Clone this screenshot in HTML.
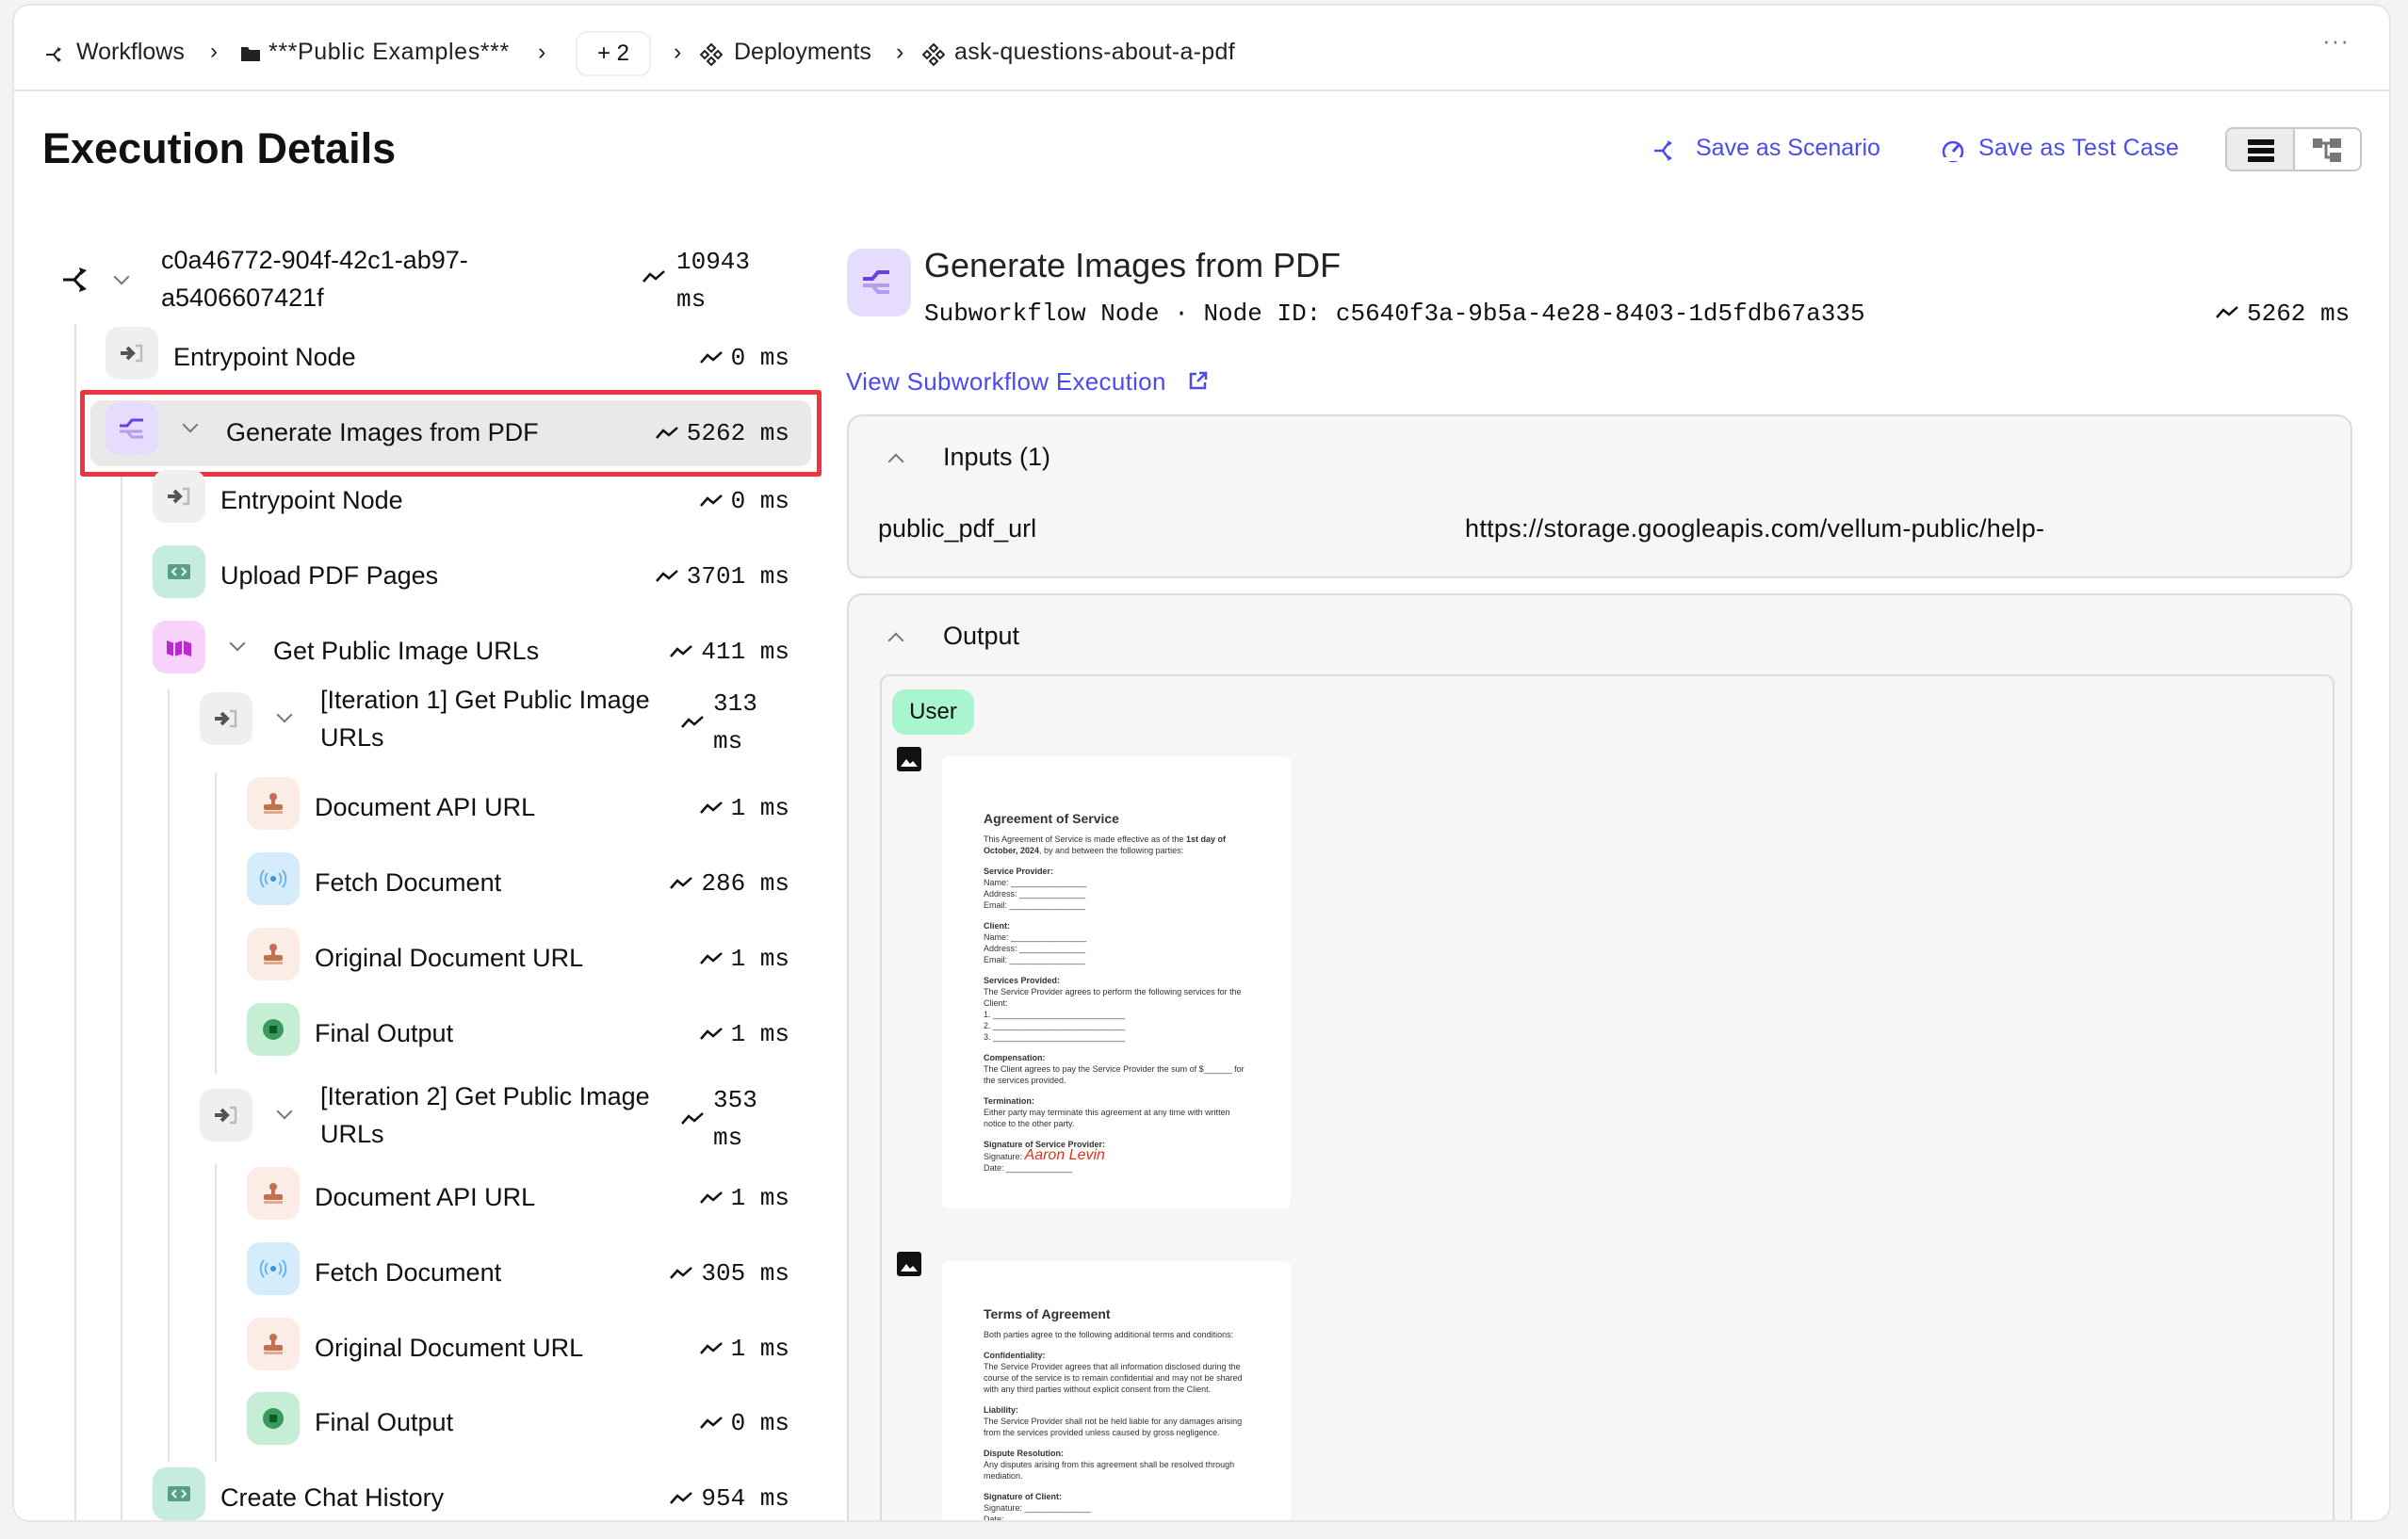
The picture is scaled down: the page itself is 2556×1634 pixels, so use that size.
<!DOCTYPE html>
<html><head><meta charset="utf-8"><style>
*{box-sizing:border-box;margin:0;padding:0}
body{width:2556px;height:1634px;background:#f3f3f3;font-family:"Liberation Sans",sans-serif;color:#111;position:relative;overflow:hidden}
.card{position:absolute;left:13px;top:4px;width:2525px;height:1612px;background:#fff;border-radius:18px;border:2px solid #e6e6e6;overflow:hidden}
.a{position:absolute;white-space:nowrap}
.bc{font-size:25px;color:#222;top:35px}
.ico{position:absolute;width:56px;height:56px;border-radius:14px;display:flex;align-items:center;justify-content:center}
.t{position:absolute;font-size:27px;color:#111;white-space:nowrap}
.ms{position:absolute;font-family:"Liberation Mono",monospace;font-size:26px;color:#111;white-space:nowrap;text-align:right}
.vl{position:absolute;width:2px;background:#e3e3e3}
.chev{position:absolute;width:12px;height:12px;border-right:2.5px solid #777;border-bottom:2.5px solid #777;transform:rotate(45deg)}
.blue{color:#4b4bf0}
.doc{position:absolute;background:#fff;border-radius:6px;font-size:9px;color:#333;padding:0 44px;white-space:normal;line-height:12px}
.doc h4{font-size:14px;margin:0 0 10px}
.doc b{display:block;font-size:9px;margin-top:10px}
#tree{position:absolute;left:-15px;top:-5px;width:1000px;height:1700px}
</style></head><body>
<div class="card">
<svg class="a" style="left:33px;top:42px" width="22" height="20" viewBox="0 0 22 20"><path d="M1 10h8l5-6M9 10l5 6" stroke="#222" stroke-width="2" fill="none"/><path d="M13 2l4 2-3 3zM13 18l4-2-3-3z" fill="#222"/></svg>
<div class="a bc" style="left:66px">Workflows</div>
<div class="a bc" style="left:208px;font-size:24px">›</div>
<svg class="a" style="left:240px;top:42px" width="22" height="18"><path d="M1 2h7l2 3h11v12H1z" fill="#222"/></svg>
<div class="a bc" style="left:270px;letter-spacing:0.6px">***Public Examples***</div>
<div class="a bc" style="left:556px">›</div>
<div class="a" style="left:596px;top:27px;width:80px;height:48px;border:2px solid #eee;border-radius:12px;font-size:24px;text-align:center;line-height:44px">+ 2</div>
<div class="a bc" style="left:700px">›</div>
<svg class="a" style="left:728px;top:40px" width="24" height="24" viewBox="0 0 24 24"><path d="M12 1l4 4-4 4-4-4zM12 15l4 4-4 4-4-4zM5 8l4 4-4 4-4-4zM19 8l4 4-4 4-4-4z" fill="none" stroke="#222" stroke-width="2"/></svg>
<div class="a bc" style="left:764px">Deployments</div>
<div class="a bc" style="left:936px">›</div>
<svg class="a" style="left:964px;top:40px" width="24" height="24" viewBox="0 0 24 24"><path d="M12 1l4 4-4 4-4-4zM12 15l4 4-4 4-4-4zM5 8l4 4-4 4-4-4zM19 8l4 4-4 4-4-4z" fill="none" stroke="#222" stroke-width="2"/></svg>
<div class="a bc" style="left:998px;letter-spacing:0.3px">ask-questions-about-a-pdf</div>
<div class="a" style="left:2450px;top:22px;font-size:26px;color:#777;letter-spacing:1px">···</div>
<div class="a" style="left:0;top:89px;width:2525px;height:2px;background:#e6e6e6"></div>

<div class="a" style="left:30px;top:126px;font-size:45px;font-weight:bold">Execution Details</div>
<svg class="a" style="left:1740px;top:142px" width="26" height="24"><path d="M1 12h9l6-8M10 12l6 8" stroke="#4b4bf0" stroke-width="2.5" fill="none"/><path d="M15 1l5 3-4 3zM15 23l5-3-4-3z" fill="#4b4bf0"/></svg>
<div class="a blue" style="left:1785px;top:137px;font-size:25px">Save as Scenario</div>
<svg class="a" style="left:2044px;top:141px" width="28" height="26"><circle cx="14" cy="14" r="10" stroke="#4b4bf0" stroke-width="2.5" fill="none"/><path d="M14 14l6-7" stroke="#4b4bf0" stroke-width="3"/><path d="M4 22h20" stroke="#fff" stroke-width="4"/></svg>
<div class="a blue" style="left:2085px;top:137px;font-size:25px;letter-spacing:0.3px">Save as Test Case</div>
<div class="a" style="left:2347px;top:129px;width:145px;height:47px;border:2px solid #c8c8c8;border-radius:8px;overflow:hidden;display:flex">
<div style="width:72px;background:#ececec;border-right:2px solid #c8c8c8;position:relative"><div class="a" style="left:22px;top:11px;width:28px;height:6px;background:#111"></div><div class="a" style="left:22px;top:20px;width:28px;height:6px;background:#111"></div><div class="a" style="left:22px;top:29px;width:28px;height:6px;background:#111"></div></div>
<div style="flex:1;position:relative"><svg class="a" style="left:17px;top:8px" width="34" height="30"><rect x="2" y="2" width="10" height="10" fill="#777"/><rect x="20" y="2" width="12" height="10" fill="#777"/><rect x="20" y="17" width="12" height="10" fill="#777"/><path d="M12 7h8M16 7v15h4" stroke="#777" stroke-width="3" fill="none"/></svg></div></div>

<svg class="a" style="left:50px;top:276px" width="34" height="30"><path d="M2 15h12l8-9M14 15l8 9" stroke="#111" stroke-width="3" fill="none"/><path d="M19 2l8 3-6 5zM19 28l8-3-6-5z" fill="#111"/></svg>
<div class="chev" style="left:108px;top:282px"></div>
<div class="t" style="left:156px;top:250px;line-height:40px">c0a46772-904f-42c1-ab97-<br>a5406607421f</div>
<div class="ms" style="left:703px;top:252px;line-height:40px;text-align:left">10943<br>ms</div>
<svg class="a" style="left:666px;top:280px" width="26" height="16"><path d="M2 13l7-8 6 5 9-8" stroke="#111" stroke-width="2.5" fill="none"/></svg>

<div class="vl" style="left:64px;top:338px;height:1280px"></div>
<div class="vl" style="left:113px;top:500px;height:1120px"></div>
<div class="vl" style="left:163px;top:725px;height:820px"></div>
<div class="vl" style="left:213px;top:815px;height:320px"></div>
<div class="vl" style="left:213px;top:1230px;height:315px"></div>

<div class="a" style="left:70px;top:408px;width:787px;height:92px;border:5px solid #f0333f;border-radius:3px"></div>
<div class="a" style="left:81px;top:419px;width:765px;height:70px;background:#e9e9e9;border-radius:12px"></div>

<div id="tree"></div>

<div class="ico" style="left:884px;top:258px;width:68px;height:72px;border-radius:16px;background:#e6dcfd"><svg width="40" height="34"><path d="M3 13h10l6-7h12" stroke="#6d3ee8" stroke-width="4" fill="none"/><path d="M3 20h28M13 20l6 7h12" stroke="#b49cf3" stroke-width="4" fill="none"/></svg></div>
<div class="a" style="left:966px;top:255px;font-size:36px;color:#222">Generate Images from PDF</div>
<div class="a" style="left:966px;top:312px;font-family:'Liberation Mono',monospace;font-size:26px">Subworkflow Node · Node ID: c5640f3a-9b5a-4e28-8403-1d5fdb67a335</div>
<svg class="a" style="left:2336px;top:318px" width="26" height="16"><path d="M2 13l7-8 6 5 9-8" stroke="#111" stroke-width="2.5" fill="none"/></svg>
<div class="ms" style="left:2370px;top:312px">5262 ms</div>
<div class="a blue" style="left:883px;top:384px;font-size:26px;letter-spacing:0.3px">View Subworkflow Execution</div>
<svg class="a" style="left:1246px;top:387px" width="22" height="22"><path d="M9 4H3v15h15v-6M12 3h7v7M19 3l-9 9" stroke="#4b4bf0" stroke-width="2.5" fill="none"/></svg>

<div class="a" style="left:884px;top:434px;width:1598px;height:174px;background:#f6f6f6;border:2px solid #dcdcdc;border-radius:16px"></div>
<div class="chev" style="left:930px;top:478px;transform:rotate(225deg)"></div>
<div class="t" style="left:986px;top:464px">Inputs (1)</div>
<div class="t" style="left:917px;top:540px">public_pdf_url</div>
<div class="t" style="left:1540px;top:540px;letter-spacing:0.3px">https://storage.googleapis.com/vellum-public/help-</div>

<div class="a" style="left:884px;top:624px;width:1598px;height:1020px;background:#f6f6f6;border:2px solid #dcdcdc;border-radius:16px"></div>
<div class="chev" style="left:930px;top:668px;transform:rotate(225deg)"></div>
<div class="t" style="left:986px;top:654px">Output</div>
<div class="a" style="left:919px;top:710px;width:1544px;height:940px;background:#f6f6f6;border:2px solid #dcdcdc;border-radius:10px"></div>
<div class="a" style="left:932px;top:726px;width:87px;height:48px;background:#a8f5cf;border-radius:14px;font-size:24px;text-align:center;line-height:48px">User</div>
<svg class="a" style="left:936px;top:786px" width="28" height="28"><rect x="1" y="1" width="26" height="26" rx="3" fill="#111"/><path d="M5 22l6-8 4 5 3-3 5 6z" fill="#fff"/></svg>
<svg class="a" style="left:936px;top:1322px" width="28" height="28"><rect x="1" y="1" width="26" height="26" rx="3" fill="#111"/><path d="M5 22l6-8 4 5 3-3 5 6z" fill="#fff"/></svg>
<div class="doc" style="left:985px;top:797px;width:370px;height:480px;padding-top:60px">
<h4>Agreement of Service</h4>This Agreement of Service is made effective as of the <span style="font-weight:bold">1st day of October, 2024</span>, by and between the following parties:
<b>Service Provider:</b>Name: ________________<br>Address: ______________<br>Email: ________________
<b>Client:</b>Name: ________________<br>Address: ______________<br>Email: ________________
<b>Services Provided:</b>The Service Provider agrees to perform the following services for the Client:<br>1. ____________________________<br>2. ____________________________<br>3. ____________________________
<b>Compensation:</b>The Client agrees to pay the Service Provider the sum of $______ for the services provided.
<b>Termination:</b>Either party may terminate this agreement at any time with written notice to the other party.
<b>Signature of Service Provider:</b>Signature: <span style="color:#e0321c;font-style:italic;font-size:16px">Aaron Levin</span><br>Date: ______________
</div>
<div class="doc" style="left:985px;top:1333px;width:370px;height:320px;padding-top:50px">
<h4>Terms of Agreement</h4>Both parties agree to the following additional terms and conditions:
<b>Confidentiality:</b>The Service Provider agrees that all information disclosed during the course of the service is to remain confidential and may not be shared with any third parties without explicit consent from the Client.
<b>Liability:</b>The Service Provider shall not be held liable for any damages arising from the services provided unless caused by gross negligence.
<b>Dispute Resolution:</b>Any disputes arising from this agreement shall be resolved through mediation.
<b>Signature of Client:</b>Signature: ______________<br>Date: ______________
</div>
</div>
<script>
var I={
e:['#efefef','<svg width="28" height="22"><path d="M2 11h11M9 5l6 6-6 6" stroke="#555" stroke-width="4" fill="none"/><path d="M18 3h6v16h-6" stroke="#bbb" stroke-width="2.5" fill="none"/></svg>'],
c:['#c6ebdf','<svg width="28" height="22"><rect x="2" y="3" width="24" height="16" rx="2" fill="#5a9e86"/><path d="M11 7l-4 4 4 4M17 7l4 4-4 4" stroke="#dff" stroke-width="2" fill="none"/></svg>'],
m:['#f8d2fb','<svg width="30" height="22"><path d="M2 4l8 3 9-3 9 3v14l-9-3-9 3-8-3z" fill="#c026d3"/><path d="M10 7v14M19 4v14" stroke="#f8d2fb" stroke-width="2"/></svg>'],
s:['#fcece6','<svg width="28" height="26"><circle cx="14" cy="6" r="4" fill="#c2714f"/><rect x="12" y="8" width="4" height="7" fill="#c2714f"/><rect x="4" y="14" width="20" height="6" rx="2" fill="#c2714f"/><rect x="4" y="21" width="20" height="3" fill="#e3a98f"/></svg>'],
p:['#d5ecfb','<svg width="30" height="20"><circle cx="15" cy="10" r="3" fill="#3b93d6"/><path d="M9 4a9 9 0 0 0 0 12M21 4a9 9 0 0 1 0 12M5 1a14 14 0 0 0 0 18M25 1a14 14 0 0 1 0 18" stroke="#6fb4e6" stroke-width="2" fill="none"/></svg>'],
f:['#c6eed4','<svg width="26" height="26"><circle cx="13" cy="13" r="11" fill="#3a9a5c"/><rect x="9" y="9" width="8" height="8" fill="#0d5a2a"/></svg>'],
g:['#e6dcfd','<svg width="32" height="26"><path d="M3 10h8l5-6h12" stroke="#6d3ee8" stroke-width="3" fill="none"/><path d="M3 16h24M11 16l5 6h12" stroke="#b49cf3" stroke-width="3" fill="none"/></svg>']};
var R=[
['e',112,184,378,'Entrypoint Node','0 ms',0],
['g',112,240,458,'Generate Images from PDF','5262 ms',196],
['e',162,234,530,'Entrypoint Node','0 ms',0],
['c',162,234,610,'Upload PDF Pages','3701 ms',0],
['m',162,290,690,'Get Public Image URLs','411 ms',246],
['e',212,340,766,'[Iteration 1] Get Public Image<br>URLs','313<br>ms',296],
['s',262,334,856,'Document API URL','1 ms',0],
['p',262,334,936,'Fetch Document','286 ms',0],
['s',262,334,1016,'Original Document URL','1 ms',0],
['f',262,334,1096,'Final Output','1 ms',0],
['e',212,340,1187,'[Iteration 2] Get Public Image<br>URLs','353<br>ms',296],
['s',262,334,1270,'Document API URL','1 ms',0],
['p',262,334,1350,'Fetch Document','305 ms',0],
['s',262,334,1430,'Original Document URL','1 ms',0],
['f',262,334,1509,'Final Output','0 ms',0],
['c',162,234,1589,'Create Chat History','954 ms',0]];
var h='';
R.forEach(function(r){var y=r[3]-4,two=r[4].indexOf('<br>')>0;
h+='<div class="ico" style="left:'+r[1]+'px;top:'+(y-28)+'px;background:'+I[r[0]][0]+'">'+I[r[0]][1]+'</div>';
if(r[6])h+='<div class="chev" style="left:'+r[6]+'px;top:'+(y-10)+'px"></div>';
h+='<div class="t" style="left:'+r[2]+'px;top:'+(two?y-40:y-16)+'px;line-height:40px">'+r[4]+'</div>';
if(two){h+='<div class="ms" style="left:757px;top:'+(y-36)+'px;line-height:40px;text-align:left">'+r[5]+'</div><svg class="a" style="left:722px;top:'+(y-4)+'px" width="26" height="16"><path d="M2 13l7-8 6 5 9-8" stroke="#111" stroke-width="2.5" fill="none"/></svg>';}
else{var w=r[5].length*15.6;h+='<div class="ms" style="left:'+(838-w)+'px;top:'+(y-10)+'px">'+r[5]+'</div><svg class="a" style="left:'+(838-w-34)+'px;top:'+(y-3)+'px" width="26" height="16"><path d="M2 13l7-8 6 5 9-8" stroke="#111" stroke-width="2.5" fill="none"/></svg>';}
});
document.getElementById('tree').innerHTML=h;
</script>
</body></html>
